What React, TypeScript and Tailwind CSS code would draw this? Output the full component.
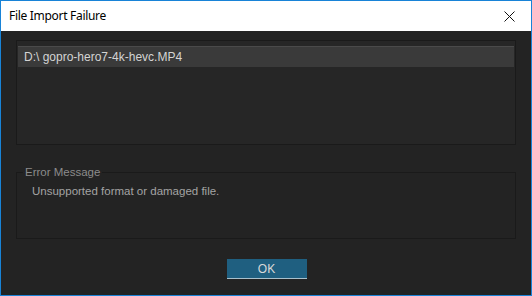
export default function App() {
  return (
    <div className="w-[532px] h-[296px] border border-[#1883d7] bg-[#232323] flex flex-col overflow-hidden font-['Liberation_Sans',sans-serif]">
      {/* Title bar */}
      <div className="h-[30px] bg-white flex items-center justify-between pl-[8px] pr-[16px] shrink-0">
        <span className="text-[12px] text-black font-['Noto_Sans',sans-serif] tracking-[-0.3px]">File Import Failure</span>
        <svg width="11" height="11" viewBox="0 0 11 11" className="mt-[1px]">
          <path d="M0.5 0.5 L10.5 10.5 M10.5 0.5 L0.5 10.5" stroke="#111" strokeWidth="1" />
        </svg>
      </div>

      <div className="flex-1 flex flex-col px-[15px] pt-[9px]">
        {/* File list */}
        <div className="h-[105px] border border-[#1a1a1a] bg-[#262626] p-[1px] pt-[5px]">
          <div className="h-[21px] bg-[#3a3a3a] border-t border-[#4a4a4a] flex items-center pl-[6px] text-[12px] text-[#d4d4d4]">
            D:\ gopro-hero7-4k-hevc.MP4
          </div>
        </div>

        {/* Error message group */}
        <div className="relative mt-[27px] h-[67px] border border-[#1a1a1a]">
          <span className="absolute -top-[9px] left-[6px] px-[2px] bg-[#232323] text-[11.5px] leading-[16px] text-[#8c8c8c]">
            Error Message
          </span>
          <div className="pt-[10px] pl-[15px] text-[11.5px] text-[#a3a3a3]">
            Unsupported format or damaged file.
          </div>
        </div>

        <div className="flex justify-center mt-[20px] pl-[1px]">
          <button className="w-[80px] h-[20px] bg-[#1f5f80] border-b border-[#a8c0cc] text-[12px] text-[#d8d8d8] flex items-center justify-center">
            OK
          </button>
        </div>
      </div>
      <div className="h-[5px] bg-[#1e2424] shrink-0" />
    </div>
  );
}
